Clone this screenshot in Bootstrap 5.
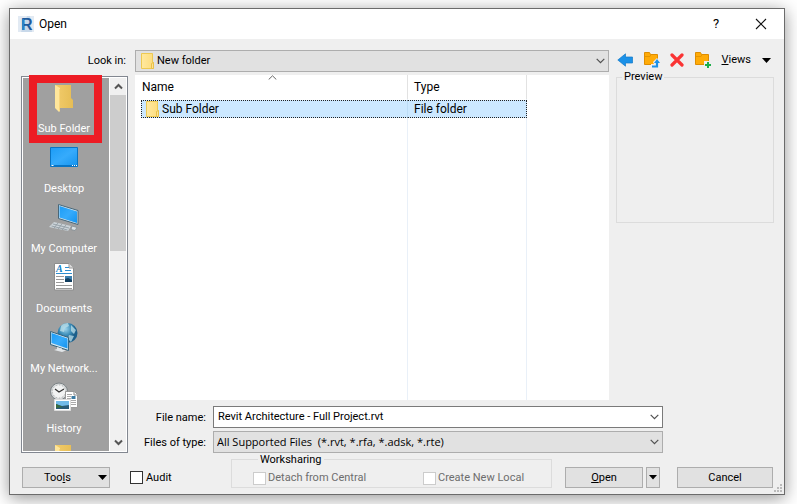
<!DOCTYPE html>
<html lang="en">
<head>
<meta charset="utf-8">
<meta name="viewport" content="width=device-width, initial-scale=1">
<title>Open</title>
<link href="https://cdn.jsdelivr.net/npm/bootstrap@5.3.0/dist/css/bootstrap.min.css" rel="stylesheet">
<style>
  :root { --ui: Roboto, "Open Sans", sans-serif; --chev: url("data:image/svg+xml,%3Csvg xmlns='http://www.w3.org/2000/svg' viewBox='0 0 9 6'%3E%3Cpath d='M.7.8 4.5 4.6 8.3.8' fill='none' stroke='%23505050' stroke-width='1.2'/%3E%3C/svg%3E"); }
  body { background: #fff; font-family: var(--ui); font-size: 11px; line-height: 16px; color: #000; overflow: hidden; }
  svg { display: block; flex: none; }
  .dialog { margin: 8px 12px 9px 9px; border: 1px solid #6b6b6b; background: #efefef; box-shadow: 0 3px 16px rgba(0,0,0,.42); }
  .titlebar { height: 30px; background: #fff; padding: 0 17px 0 8px; }
  .titlebar h1 { font-size: 12px; line-height: 16px; font-weight: 400; margin: 0 0 0 5px; }
  .help { width: 16px; font-size: 13px; margin-right: 31px; }
  .plain { border: 0; background: none; padding: 0; color: inherit; }
  .main { padding: 11px 10px 0 11px; column-gap: 7px; }
  .side { width: 107px; }
  .look { height: 22px; padding-right: 2px; margin-bottom: 4px; }
  .places { height: 377px; border: 1px solid #828790; background: #fff; padding: 1px; }
  .placelist { background: #a0a0a0; overflow: hidden; height: 100%; }
  .place { height: 60px; width: 100%; padding: 4px 4px 0 0; color: #fff; display: flex; flex-direction: column; align-items: center; }
  .place svg { margin-bottom: 9px; }
  .marker { left: 7px; top: -2px; width: 73px; height: 68px; border: 8px solid #ed1c24; pointer-events: none; }
  .track { width: 17px; border-left: 1px solid #fff; background: #f0f0f0; }
  .track button { height: 17px; width: 100%; display: flex; align-items: center; justify-content: center; }
  .thumb { height: 156px; background: #cdcdcd; }
  .combo { width: 100%; height: 22px; border: 1px solid #adadad; border-radius: 0; background: #e1e1e1 var(--chev) no-repeat right 3px center / 9px 6px; appearance: none; font-size: 11px; line-height: 16px; padding: 0 16px 1px 3px; color: #000; outline: 0; }
  .combo.edit { background-color: #fff; border-color: #7a7a7a; padding-left: 4px; }
  .combo.withicon { padding-left: 21px; }
  .combo.wide { font-family: "Open Sans", "Noto Sans", sans-serif; }
  .stack { display: grid; align-items: center; margin-bottom: 3px; }
  .stack > * { grid-area: 1 / 1; }
  .stack svg { margin-left: 6px; z-index: 1; pointer-events: none; }
  .files { background: #fff; height: 325px; padding-left: 6px; }
  .files table { width: 386px; height: 100%; table-layout: fixed; border-collapse: separate; border-spacing: 0; font-size: 12px; }
  .files th, .files td { padding: 0 0 0 6px; border-right: 1px solid #e9f0f8; vertical-align: middle; font-weight: 400; }
  .files th { height: 24px; border-color: #e2e2e2; }
  .files th:first-child { padding-left: 1px; }
  .files .gapline td { height: 1px; }
  .files .picked td { height: 18px; background: #cce8ff; line-height: 16px; border-top: 1px dotted #222; border-bottom: 1px dotted #222; }
  .files .picked td:first-child { border-left: 1px dotted #222; padding-left: 4px; border-right-color: #bcdcf5; }
  .files .picked td:last-child { border-right: 1px dotted #222; }
  .files .picked svg { margin-right: 3px; }
  .namecol { width: 267px; }
  .sorted { left: 133px; top: 0; }
  .center { margin-right: 7px; }
  .panel { width: 158px; }
  .tools { height: 20px; padding: 0 3px 0 1px; margin-bottom: -1px; }
  .views span { margin-right: 11px; }
  .box { border: 1px solid #dcdcdc; min-width: 0; }
  .box legend { float: none; width: auto; font-size: 11px; line-height: 16px; padding: 0 2px; margin: 0 0 0 5px; }
  .preview { height: 154px; }
  .fields { display: grid; grid-template-columns: 71px 1fr; column-gap: 7px; row-gap: 3px; margin: 6px 111px 0 0; }
  .fields label { text-align: right; padding-top: 4px; }
  .foot { padding: 0 11px 6px 12px; height: 41px; }
  .push { height: 21px; border: 1px solid #adadad; background: #e1e1e1; padding: 0; color: #000; line-height: 16px; }
  .w-tools { width: 88px; padding: 0 2px 0 21px; }
  .w-open { width: 78px; margin-right: 3px; }
  .w-split { width: 14px; margin-right: 17px; }
  .w-cancel { width: 96px; }
  .tick { appearance: none; width: 13px; height: 13px; border: 1px solid #333; background: #fff; margin: 0; flex: none; }
  .tick:disabled { border-color: #ccc; }
  .dim { color: #6d6d6d; padding-top: 2px; }
  .audit { width: 101px; margin-left: 20px; height: 21px; gap: 3px; }
  .share { width: 321px; height: 37px; padding: 0 0 0 21px; }
  .share legend { padding-top: 1px; }
  .share label { gap: 2px; }
  .detach { width: 170px; }
  .grip { right: 1px; bottom: 1px; }
</style>
<script src="https://cdn.jsdelivr.net/npm/bootstrap@5.3.0/dist/js/bootstrap.bundle.min.js"></script>
</head>
<body>
<svg width="0" height="0" class="position-absolute" aria-hidden="true">
  <defs>
    <linearGradient id="yel" x1="0" x2="1"><stop offset="0" stop-color="#ffe9a0"/><stop offset="1" stop-color="#fddc7c"/></linearGradient>
    <linearGradient id="gold" x1="0" x2="1"><stop offset="0" stop-color="#f2cc6c"/><stop offset="1" stop-color="#e6bd55"/></linearGradient>
    <linearGradient id="blu" x1="0" y1="0" x2="1" y2="1"><stop offset="0" stop-color="#1c9cf6"/><stop offset=".5" stop-color="#36abfc"/><stop offset="1" stop-color="#1493ee"/></linearGradient>
    <radialGradient id="globe" cx=".4" cy=".3"><stop offset="0" stop-color="#9ed4ec"/><stop offset=".6" stop-color="#3e8fb9"/><stop offset="1" stop-color="#1c5f8b"/></radialGradient>
    <symbol id="smallfolder" viewBox="0 0 13 16"><path d="M.5.5h11v9h1v6H.5z" fill="url(#yel)" stroke="#edc952"/><path d="M10.500 15.500v-5l2-1v6z" fill="#ffe390" stroke="#e9c148"/></symbol>
    <symbol id="bigfolder" viewBox="1 -3 18 30"><path d="M1 0h16v13l2 2v8H6z" fill="url(#gold)"/><path d="M1 0l5 3v23l-1 1-4-4z" fill="#ffe69b"/><path d="M5 4h1v21l-1 1z" fill="#f7d47c"/></symbol>
    <symbol id="orangefolder" viewBox="0 0 16 14"><path d="M.5 12.500V.5h5l1 2h7v10z" fill="#ffab08" stroke="#df8d00"/><path d="M1 4.500h5l1-2" fill="none" stroke="#e59500"/></symbol>
  </defs>
</svg>
<main class="dialog position-relative">
  <header class="titlebar d-flex align-items-center">
    <svg width="16" height="16" viewBox="0 0 16 16" aria-hidden="true"><path fill="#c9d9ea" d="M0 0h16v16H0z"/><path fill="#e2eaf3" d="M0 0h9L3 16H0zM12 0h4v16h-2z"/><text x="3" y="14" font-family="Liberation Sans, sans-serif" font-weight="700" font-size="16" fill="#1f5b9d">R</text><path d="M4 3h2v11H4z" fill="#2c83c5"/></svg>
    <h1 class="flex-grow-1">Open</h1>
    <button class="plain help" type="button" aria-label="Help">?</button>
    <button class="plain" type="button" aria-label="Close"><svg width="12" height="12" viewBox="0 0 12 12"><path d="M1 1l10 10M11 1 1 11" stroke="#111" stroke-width="1.100"/></svg></button>
  </header>

  <div class="main d-flex">
    <div class="side flex-shrink-0">
      <div class="look d-flex align-items-center justify-content-end"><label for="lookin">Look in:</label></div>
      <div class="places d-flex position-relative">
        <nav class="placelist flex-grow-1" aria-label="Places">
          <button class="plain place" type="button"><svg width="18" height="30"><use href="#bigfolder"/></svg><span>Sub Folder</span></button>
          <button class="plain place" type="button"><svg width="28" height="30" viewBox="0 0 28 30"><path d="M.5 5.500h27v19H.5z" fill="url(#blu)" stroke="#0874c4"/><path d="M1 23h26v1H1z" fill="#0874c4"/><path d="M1.500 23.500h2M22 23.500h1m1 0h1m1 0h1" stroke="#fff"/></svg><span>Desktop</span></button>
          <button class="plain place" type="button"><svg width="30" height="30" viewBox="0 0 30 30"><path d="M9.500 2.500 29 8.500v14L9.500 16.500z" fill="#d7e5ed" stroke="#47677a"/><path d="M10.500 4 28 9.500v11.500L10.500 15.500z" fill="url(#blu)"/><path d="m5 20 17 4-3 5L0 25z" fill="#cbd3d8"/><path d="m4 22 16 4M2.500 24l16 4M9 21l-4 5m8-4-4 5m8-4-4 5" stroke="#8c979e" stroke-width=".8"/><path d="m23 24 5 1.500-2 3-4-1z" fill="#dce2e5" stroke="#7b878e" stroke-width=".7"/></svg><span>My Computer</span></button>
          <button class="plain place" type="button"><svg width="20" height="30" viewBox="0 0 20 30"><path d="M.5 1.500H15l4.500 4.500v22H.5z" fill="#fff" stroke="#8d8d8d"/><path d="M15 1.500V6h4.500" fill="#ddd" stroke="#999"/><text x="2" y="10" font-family="Liberation Serif, serif" font-style="italic" font-weight="700" font-size="10" fill="#147fc5">A</text><path d="M11 5.500h4M11 8.500h6M2 11.500h16" stroke="#2e8ed0"/><path d="M2 14.500h8m-8 3h8m-8 3h8m-8 3h16m-16 3h16" stroke="#999"/><path d="M11 14h7v6h-7z" fill="#397eae"/><path d="m11 17 3-1 4 2v2h-7z" fill="#123f60"/></svg><span>Documents</span></button>
          <button class="plain place" type="button"><svg width="28" height="30" viewBox="0 0 28 30"><circle cx="17.500" cy="11" r="10" fill="url(#globe)"/><path d="M11 4c2-3 7-3 7-3l1 3-4 2-1 4-4-1zM21 3l5 5-2 4-3-3zM19 13l5 1-3 6-3-3z" fill="#bde0e9" opacity=".75"/><path d="m.5 9.500 18 6v13l-18-6z" fill="#d6e7ef" stroke="#36657f"/><path d="m1.500 11 16 5.500v10l-16-5.500z" fill="url(#blu)"/><path d="m7 25 5 1.500v1l4 1-4 1.500-8-2 3-1z" fill="#e1e5e8"/></svg><span>My Network...</span></button>
          <button class="plain place" type="button"><svg width="30" height="30" viewBox="0 0 30 30"><circle cx="10" cy="9.500" r="8.500" fill="#d5d8d9" stroke="#7b8285"/><circle cx="10" cy="9.500" r="6.500" fill="#f2f3f3" stroke="#999" stroke-width=".7" stroke-dasharray="1 2"/><path d="m6 7 4 3 5-3" fill="none" stroke="#333" stroke-width="1.200"/><path d="M16.500 9.500h9l3 3v13h-12z" fill="#fff" stroke="#999"/><path d="M25 10v3h3" fill="none" stroke="#888"/><path d="M18 12.500h5M18 14.500h4m-4 2h4m-4 2h9m-9 2h9m-9 2h9" stroke="#aaa"/><path d="M22.500 14h4v3h-4z" fill="#3c7ba3"/><path d="M5.500 17.500h16v11h-16z" fill="#fff" stroke="#ddd"/><path d="M7 19h13v8H7z" fill="#70bbe9"/><path d="m7 22 6 2 7-1v4H7z" fill="#285b78"/><path d="m7 22 7 3-7 1z" fill="#376c40"/></svg><span>History</span></button>
          <button class="plain place" type="button" aria-label="Folder"><svg width="18" height="30"><use href="#bigfolder"/></svg></button>
        </nav>
        <div class="track flex-shrink-0 d-flex flex-column">
          <button class="plain" type="button" aria-label="Scroll up"><svg width="9" height="7" viewBox="0 0 9 7"><path d="M1 5.500 4.500 2 8 5.500" fill="none" stroke="#555" stroke-width="2"/></svg></button>
          <div class="thumb"></div>
          <button class="plain mt-auto" type="button" aria-label="Scroll down"><svg width="9" height="7" viewBox="0 0 9 7"><path d="M1 1.500 4.500 5 8 1.500" fill="none" stroke="#555" stroke-width="2"/></svg></button>
        </div>
        <div class="marker position-absolute"></div>
      </div>
    </div>

    <div class="flex-grow-1">
      <div class="d-flex">
        <div class="center flex-grow-1">
          <div class="stack"><select class="combo withicon" id="lookin"><option>New folder</option></select><svg width="13" height="16"><use href="#smallfolder"/></svg></div>
          <div class="files position-relative">
            <table>
              <colgroup><col class="namecol"><col></colgroup>
              <thead><tr><th>Name</th><th>Type</th></tr></thead>
              <tbody>
                <tr class="gapline"><td></td><td></td></tr>
                <tr class="picked"><td><div class="d-flex align-items-center"><svg width="13" height="16"><use href="#smallfolder"/></svg>Sub Folder</div></td><td>File folder</td></tr>
                <tr><td></td><td></td></tr>
              </tbody>
            </table>
            <svg class="sorted position-absolute" width="9" height="5" viewBox="0 0 9 5"><path d="M.7 4.500 4.500.8 8.300 4.500" fill="none" stroke="#666"/></svg>
          </div>
        </div>
        <aside class="panel flex-shrink-0">
          <div class="tools d-flex align-items-center justify-content-between">
            <button class="plain" type="button" aria-label="Back"><svg width="16" height="14" viewBox="0 0 16 14"><path d="M.8 7 8.500.8V4h7v6h-7v3.200z" fill="#1b91e8" stroke="#147ac7" stroke-width=".7"/></svg></button>
            <button class="plain" type="button" aria-label="Up one level"><svg width="16" height="16" viewBox="0 0 16 16"><use href="#orangefolder" width="16" height="14"/><path d="M7 15.500V12h3l-1-2 4-4 3 4v5.500z" fill="#efefef"/><path d="M8 14.500h5V10" fill="none" stroke="#1b91e8" stroke-width="2.200"/><path d="m10 11 3-4 3 4z" fill="#1b91e8"/></svg></button>
            <button class="plain" type="button" aria-label="Delete"><svg width="14" height="14" viewBox="0 0 14 14"><path d="m2 2 10 10M12 2 2 12" stroke="#fa3434" stroke-width="3.200" stroke-linecap="round"/></svg></button>
            <button class="plain" type="button" aria-label="New folder"><svg width="16" height="16" viewBox="0 0 16 16"><use href="#orangefolder" width="16" height="14"/><path d="M9 9h7v7H9z" fill="#efefef"/><path d="M13 10v6m-3-3h6" stroke="#1eae4b" stroke-width="2"/></svg></button>
            <button class="plain d-flex align-items-center views" type="button"><span><u>V</u>iews</span><svg width="9" height="5" viewBox="0 0 9 5"><path d="M0 0h9L4.500 5z"/></svg></button>
          </div>
          <fieldset class="box preview"><legend>Preview</legend></fieldset>
        </aside>
      </div>
      <div class="fields">
        <label for="fname">File name:</label><input class="combo edit" id="fname" type="text" value="Revit Architecture - Full Project.rvt">
        <label for="ftype">Files of type:</label><select class="combo wide" id="ftype"><option>All Supported Files&nbsp; (*.rvt, *.rfa, *.adsk, *.rte)</option></select>
      </div>
    </div>
  </div>

  <footer class="foot d-flex align-items-end">
    <button class="push w-tools d-flex align-items-center justify-content-between" type="button"><span>Too<u>l</u>s</span><svg width="9" height="5" viewBox="0 0 9 5"><path d="M0 0h9L4.500 5z"/></svg></button>
    <label class="audit d-flex align-items-center"><input class="tick" type="checkbox">Audit</label>
    <fieldset class="box share"><legend>Worksharing</legend>
      <div class="d-flex dim">
        <label class="detach d-flex align-items-center"><input class="tick" type="checkbox" disabled>Detach from Central</label>
        <label class="d-flex align-items-center"><input class="tick" type="checkbox" disabled>Create New Local</label>
      </div>
    </fieldset>
    <div class="d-flex ms-auto">
      <button class="push w-open" type="button"><u>O</u>pen</button>
      <button class="push w-split d-flex align-items-center justify-content-center" type="button" aria-label="Open options"><svg width="8" height="5" viewBox="0 0 8 5"><path d="M0 0h8L4 4.500z"/></svg></button>
      <button class="push w-cancel" type="button">Cancel</button>
    </div>
  </footer>
  <svg class="grip position-absolute" width="9" height="9" viewBox="0 0 9 9"><path d="M6 0h2v2H6zM3 3h2v2H3zm3 0h2v2H6zM0 6h2v2H0zm3 0h2v2H3zm3 0h2v2H6z" fill="#bbb"/></svg>
</main>
</body>
</html>
